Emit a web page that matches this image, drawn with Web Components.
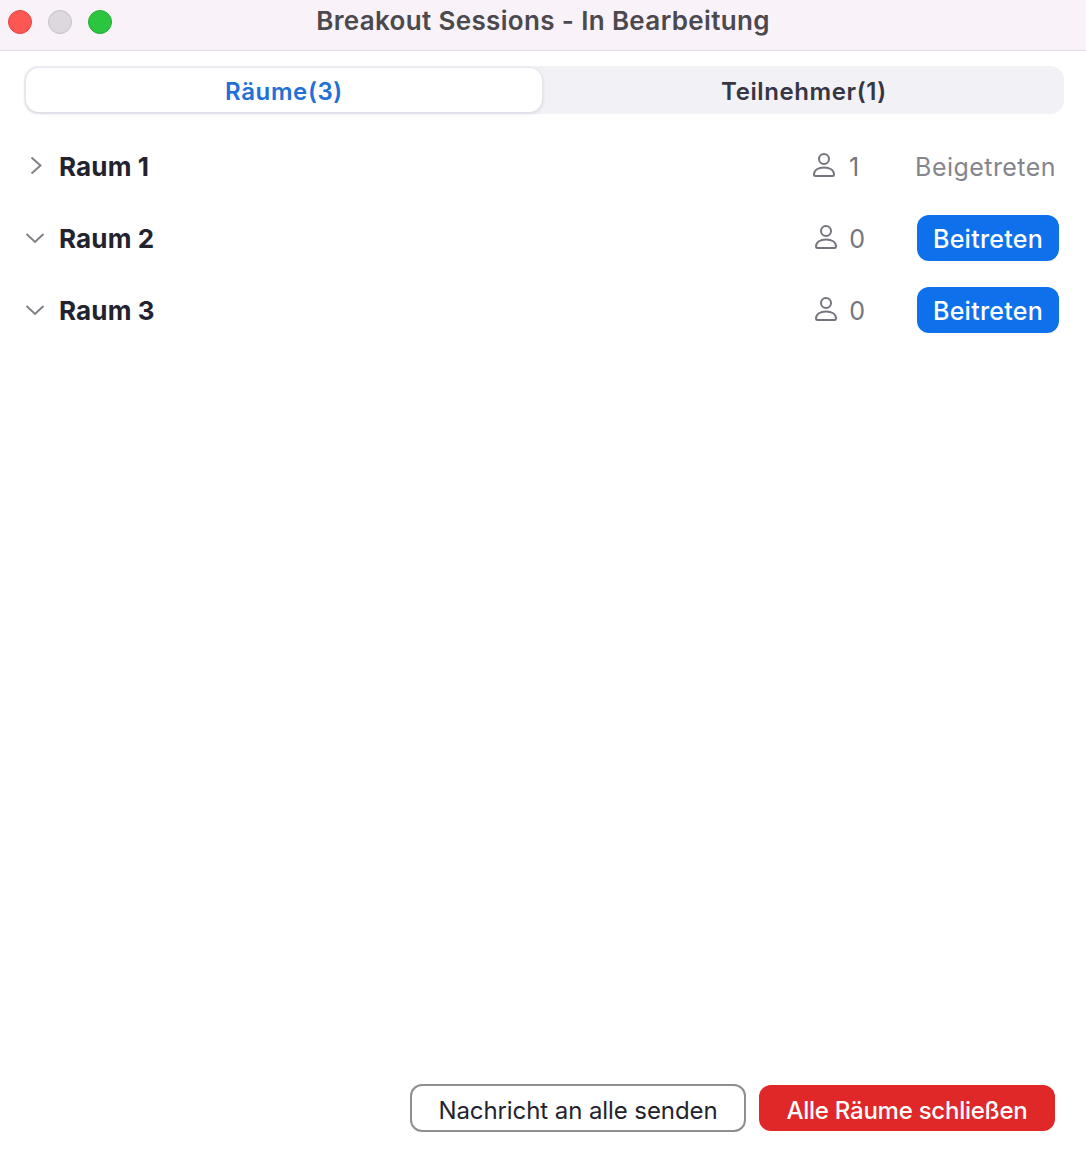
<!DOCTYPE html>
<html lang="de">
<head>
<meta charset="utf-8">
<title>Breakout Sessions</title>
<style>
  html, body { margin: 0; height: 100%; background: #fff; }
  body { font-family: Inter, "Liberation Sans", sans-serif; color: #23232f; }
  breakout-window { height: 1152px; }
</style>
</head>
<body>
<breakout-window>
  <title-bar slot="title">Breakout Sessions - In Bearbeitung</title-bar>
  <tab-bar slot="tabs">
    <tab-item active>Räume(3)</tab-item>
    <tab-item>Teilnehmer(1)</tab-item>
  </tab-bar>
  <room-row name="Raum 1" count="1" joined></room-row>
  <room-row name="Raum 2" count="0" open></room-row>
  <room-row name="Raum 3" count="0" open></room-row>
  <action-button slot="footer" kind="outline">Nachricht an alle senden</action-button>
  <action-button slot="footer" kind="danger">Alle Räume schließen</action-button>
</breakout-window>

<script>
class BreakoutWindow extends HTMLElement {
  constructor() {
    super();
    this.attachShadow({ mode: 'open' });
    this.shadowRoot.innerHTML = `
      <style>
        :host { display: flex; flex-direction: column; }
        .rooms { flex: 1; padding-top: 16px; }
        .footer { display: flex; justify-content: flex-end; gap: 13px; padding: 0 31px 20px 0; }
      </style>
      <slot name="title"></slot>
      <slot name="tabs"></slot>
      <div class="rooms"><slot></slot></div>
      <div class="footer"><slot name="footer"></slot></div>
    `;
  }
}

class TitleBar extends HTMLElement {
  constructor() {
    super();
    this.attachShadow({ mode: 'open' });
    this.shadowRoot.innerHTML = `
      <style>
        :host {
          display: flex;
          align-items: center;
          position: relative;
          height: 50px;
          box-sizing: content-box;
          background: #f9f2f9;
          border-bottom: 1px solid #e3dbe1;
        }
        .lights { display: flex; gap: 16px; padding: 0 0 6px 8px; }
        .lights span { width: 22px; height: 22px; border-radius: 50%; border: 1px solid; }
        .close { background: #fc5753; border-color: #df4744 !important; }
        .min { background: #ddd8de; border-color: #c5bfc6 !important; }
        .max { background: #2cc53f; border-color: #27aa35 !important; }
        .label {
          position: absolute;
          left: 0; right: 0; top: 4px;
          text-align: center;
          font-size: 26px;
          letter-spacing: 0.35px;
          line-height: 34px;
          font-weight: 600;
          color: #4b494e;
        }
      </style>
      <div class="lights"><span class="close"></span><span class="min"></span><span class="max"></span></div>
      <div class="label"><slot></slot></div>
    `;
  }
}

class TabBar extends HTMLElement {
  constructor() {
    super();
    this.attachShadow({ mode: 'open' });
    this.shadowRoot.innerHTML = `
      <style>
        :host {
          display: flex;
          height: 48px;
          margin: 15px 22px 0 24px;
          padding: 2px;
          box-sizing: border-box;
          background: #f1f1f6;
          border-radius: 14px;
        }
      </style>
      <slot></slot>
    `;
  }
}

class TabItem extends HTMLElement {
  constructor() {
    super();
    this.attachShadow({ mode: 'open' });
    this.shadowRoot.innerHTML = `
      <style>
        :host {
          flex: 1;
          display: flex;
          align-items: center;
          justify-content: center;
          padding: 2px 0 0 4px;
          box-sizing: border-box;
          font-size: 24px;
          font-weight: 600;
          letter-spacing: 0.6px;
          color: #363644;
          border-radius: 13px;
        }
        :host([active]) {
          flex: 0 0 516px;
          padding-left: 0;
          color: #2270d6;
          background: #fff;
          box-shadow: 0 1px 4px rgba(60, 60, 90, 0.18);
        }
      </style>
      <slot></slot>
    `;
  }
}

class RoomRow extends HTMLElement {
  static get observedAttributes() {
    return ['name', 'count', 'open', 'joined'];
  }

  constructor() {
    super();
    this.attachShadow({ mode: 'open' });
    this.render();
  }

  attributeChangedCallback() {
    this.render();
  }

  render() {
    const name = this.getAttribute('name') || '';
    const count = this.getAttribute('count') || '0';
    const open = this.hasAttribute('open');
    const joined = this.hasAttribute('joined');
    const chevron = open
      ? '<path d="M2.5 7l8.500 8 8.500-8"/>'
      : '<path d="M7.500 2.500l9 8-9 8"/>';

    this.shadowRoot.innerHTML = `
      <style>
        :host { display: flex; align-items: center; height: 72px; padding: 0 27px 0 24px; }
        .chev { width: 23px; height: 23px; flex: none; margin-right: 12px; fill: none; stroke: #808088; stroke-width: 2; }
        .name { flex: 1; font-size: 26px; font-weight: 700; letter-spacing: 0.15px; color: #23232f; }
        .person { width: 22px; height: 24px; flex: none; margin: 0 ${joined ? 14 : 12}px 2px 0; fill: none; stroke: #74747c; stroke-width: 2; }
        .count { font-size: 25px; color: #74747c; padding-top: 2px; }
        .joined { font-size: 25px; letter-spacing: 0.45px; color: #85858c; margin: 0 3px 0 56px; padding-top: 2px; }
        .btn { margin-left: 52px; }
      </style>
      <svg class="chev" viewBox="0 0 23 23">${chevron}</svg>
      <span class="name">${name}</span>
      <svg class="person" viewBox="0 0 22 24">
        <circle cx="11" cy="6" r="5"/>
        <path d="M2.500 23c-.9 0-1.500-.5-1.500-1.300C1 17 5.500 14.500 11 14.500s10 2.500 10 7.200c0 .8-.6 1.300-1.500 1.300z"/>
      </svg>
      <span class="count">${count}</span>
      ${joined
        ? '<span class="joined">Beigetreten</span>'
        : '<action-button class="btn" kind="primary">Beitreten</action-button>'}
    `;
  }
}

class ActionButton extends HTMLElement {
  constructor() {
    super();
    this.attachShadow({ mode: 'open' });
    this.shadowRoot.innerHTML = `
      <style>
        :host {
          display: inline-flex;
          align-items: center;
          justify-content: center;
          height: 46px;
          box-sizing: border-box;
          border-radius: 12px;
          font-size: 24px;
          padding-top: 4px;
          white-space: nowrap;
        }
        :host([kind="primary"]) { width: 142px; padding-top: 2px; font-size: 25px; letter-spacing: 0.25px; background: #0e71eb; color: #fff; font-weight: 500; }
        :host([kind="danger"]) { width: 296px; letter-spacing: -0.25px; background: #e02828; color: #fff; font-weight: 500; }
        :host([kind="outline"]) { width: 336px; height: 48px; margin-top: -1px; letter-spacing: -0.08px; background: #fff; color: #23232f; border: 2px solid #8e8e92; }
      </style>
      <slot></slot>
    `;
  }
}

customElements.define('breakout-window', BreakoutWindow);
customElements.define('title-bar', TitleBar);
customElements.define('tab-bar', TabBar);
customElements.define('tab-item', TabItem);
customElements.define('room-row', RoomRow);
customElements.define('action-button', ActionButton);
</script>
</body>
</html>
